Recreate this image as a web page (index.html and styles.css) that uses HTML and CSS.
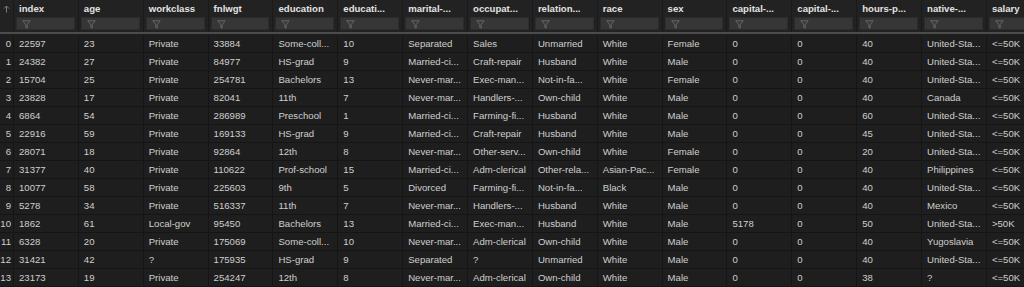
FILE: index.html
```html
<!DOCTYPE html>
<html>
<head>
<meta charset="utf-8">
<link rel="stylesheet" href="styles.css">
</head>
<body>
<div class="table">
  <div class="row head">
    <div class="cell idx"><svg class="sort" width="7" height="8" viewBox="0 0 7 8"><path d="M3.5 7.5V1M1 3.5L3.5 1L6 3.5" fill="none" stroke="#7a7a7a" stroke-width="1"/></svg></div>
    <div class="cell">index</div><div class="cell">age</div><div class="cell">workclass</div><div class="cell">fnlwgt</div><div class="cell">education</div><div class="cell">educati...</div><div class="cell">marital-...</div><div class="cell">occupat...</div><div class="cell">relation...</div><div class="cell">race</div><div class="cell">sex</div><div class="cell">capital-...</div><div class="cell">capital-...</div><div class="cell">hours-p...</div><div class="cell">native-...</div><div class="cell">salary</div>
  </div>
  <div class="row filters" id="filters"></div>
  <div id="body"></div>
</div>
<script src="app.js"></script>
</body>
</html>
```
FILE: app.js
```js
const rows = [
["22597","23","Private","33884","Some-coll...","10","Separated","Sales","Unmarried","White","Female","0","0","40","United-Sta...","<=50K"],
["24382","27","Private","84977","HS-grad","9","Married-ci...","Craft-repair","Husband","White","Male","0","0","40","United-Sta...","<=50K"],
["15704","25","Private","254781","Bachelors","13","Never-mar...","Exec-man...","Not-in-fa...","White","Female","0","0","40","United-Sta...","<=50K"],
["23828","17","Private","82041","11th","7","Never-mar...","Handlers-...","Own-child","White","Male","0","0","40","Canada","<=50K"],
["6864","54","Private","286989","Preschool","1","Married-ci...","Farming-fi...","Husband","White","Male","0","0","60","United-Sta...","<=50K"],
["22916","59","Private","169133","HS-grad","9","Married-ci...","Craft-repair","Husband","White","Male","0","0","45","United-Sta...","<=50K"],
["28071","18","Private","92864","12th","8","Never-mar...","Other-serv...","Own-child","White","Female","0","0","20","United-Sta...","<=50K"],
["31377","40","Private","110622","Prof-school","15","Married-ci...","Adm-clerical","Other-rela...","Asian-Pac...","Female","0","0","40","Philippines","<=50K"],
["10077","58","Private","225603","9th","5","Divorced","Farming-fi...","Not-in-fa...","Black","Male","0","0","40","United-Sta...","<=50K"],
["5278","34","Private","516337","11th","7","Never-mar...","Handlers-...","Husband","White","Male","0","0","40","Mexico","<=50K"],
["1862","61","Local-gov","95450","Bachelors","13","Married-ci...","Exec-man...","Husband","White","Male","5178","0","50","United-Sta...",">50K"],
["6328","20","Private","175069","Some-coll...","10","Never-mar...","Adm-clerical","Own-child","White","Male","0","0","40","Yugoslavia","<=50K"],
["31421","42","?","175935","HS-grad","9","Separated","?","Unmarried","White","Male","0","0","40","United-Sta...","<=50K"],
["23173","19","Private","254247","12th","8","Never-mar...","Adm-clerical","Own-child","White","Male","0","0","38","?","<=50K"]
];
const funnel = '<svg class="funnel" width="9" height="9" viewBox="0 0 9 9"><path d="M0.8 0.8H8.2L5.2 4.4V8.2L3.8 7.4V4.4Z" fill="none" stroke="#6c6c6c" stroke-width="0.9" stroke-linejoin="round"/></svg>';
const f = document.getElementById('filters');
let fh = '<div class="cell idx"></div>';
for (let i = 0; i < 16; i++) fh += '<div class="cell"><div class="fbox">' + funnel + '</div></div>';
f.innerHTML = fh;
const esc = s => s.replace(/&/g, '&amp;').replace(/</g, '&lt;').replace(/>/g, '&gt;');
const body = document.getElementById('body');
let html = '';
rows.forEach((r, i) => {
  html += '<div class="row data"><div class="cell idx">' + i + '</div>';
  r.forEach(v => { html += '<div class="cell">' + esc(v) + '</div>'; });
  html += '</div>';
});
body.innerHTML = html;
```
FILE: styles.css
```css
html, body {
  margin: 0;
  padding: 0;
  background: #1e1e1e;
  overflow: hidden;
  width: 1024px;
  height: 287px;
}
.table {
  font-family: "Liberation Sans", Arial, sans-serif;
  font-size: 9.6px;
  color: #cfcfcf;
}
.row {
  display: grid;
  grid-template-columns: 13px repeat(16, 64.87px);
  white-space: nowrap;
}
.cell {
  overflow: hidden;
  border-left: 1px solid #151515;
  padding: 0 0 0 5px;
}
.cell.idx {
  border-left: none;
  padding: 0 2px 0 0;
  text-align: right;
}
.head {
  height: 16px;
  line-height: 17px;
  font-weight: bold;
  color: #e2e2e2;
  background: #222222;
}
.head .cell { border-left-color: #1a1a1a; }
.sort { display: block; margin: 5px 0 0 3px; }
.filters {
  height: 16px;
  background: #222222;
  border-bottom: 2px solid #4c4c4c;
}
.filters .cell { padding: 1px 3px 0 2px; border-left-color: #1a1a1a; }
.fbox {
  height: 13px;
  background: #363636;
  box-sizing: border-box;
  border: 1px solid #2c2c2c;
}
.funnel { display: block; margin: 2px 0 0 5px; }
.data {
  height: 18px;
  line-height: 18px;
  box-sizing: border-box;
  border-bottom: 1px solid #151515;
}
.data:first-child { margin-top: 1px; }
```
